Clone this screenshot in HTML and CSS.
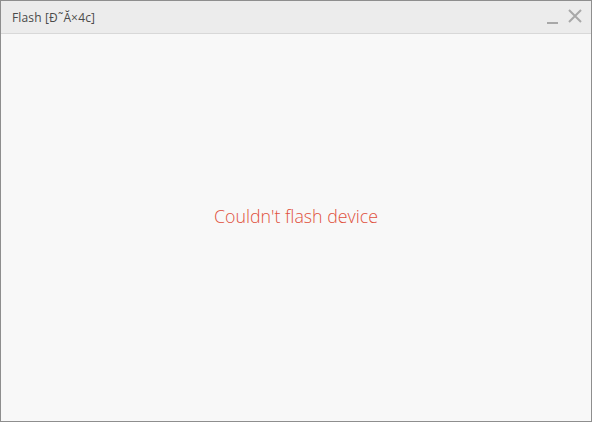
FILE: index.html
```html
<!DOCTYPE html>
<html>
<head>
<meta charset="utf-8">
<link rel="stylesheet" href="styles.css">
</head>
<body>
<div class="window">
  <div class="titlebar">
    <span class="title">Flash [Ð˜Ă×4c]</span>
    <div class="controls">
      <svg class="min" width="12" height="12" viewBox="0 0 12 12"><line x1="0" y1="11" x2="11" y2="11" stroke="#a8a8a8" stroke-width="2"/></svg>
      <svg class="close" width="14" height="14" viewBox="0 0 14 14"><path d="M1 1L13 13M13 1L1 13" stroke="#a8a8a8" stroke-width="2"/></svg>
    </div>
  </div>
  <div class="content">
    <p class="error">Couldn't flash device</p>
  </div>
</div>
</body>
</html>
```
FILE: styles.css
```css
html, body { margin: 0; padding: 0; }
body { width: 592px; height: 422px; overflow: hidden; font-family: "Open Sans", "Noto Sans", sans-serif; }
.window {
  box-sizing: border-box;
  width: 592px; height: 422px;
  border: 1px solid #8e8e8e;
  display: flex; flex-direction: column;
  background: #f8f8f8;
}
.titlebar {
  height: 32px;
  background: #ececec;
  border-bottom: 1px solid #d8d8d8;
  display: flex; align-items: center; justify-content: space-between;
  padding: 0 9px 0 11px;
  flex-shrink: 0;
}
.title { font-size: 12px; color: #4a4a4a; font-weight: 400; letter-spacing: 0.15px; }
.controls { display: flex; align-items: center; gap: 9px; margin-top: -2px; }
.min { margin-top: 3px; }
.content { flex: 1; display: flex; align-items: center; justify-content: center; padding-bottom: 24px; }
.error { margin: 0; font-size: 17.8px; color: #e0503c; font-weight: 300; }
```
